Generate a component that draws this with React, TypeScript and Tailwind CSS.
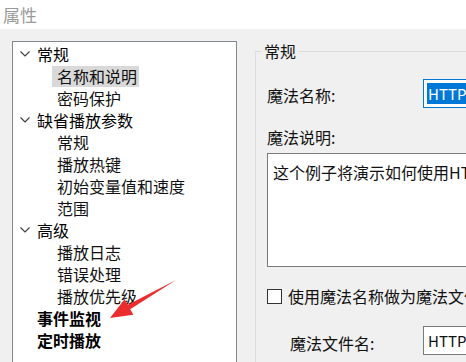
import React from 'react';

type Node = { label: string; level: 0 | 1; chevron?: boolean; bold?: boolean; selected?: boolean };

const tree: Node[] = [
  { label: '常规', level: 0, chevron: true },
  { label: '名称和说明', level: 1, selected: true },
  { label: '密码保护', level: 1 },
  { label: '缺省播放参数', level: 0, chevron: true },
  { label: '常规', level: 1 },
  { label: '播放热键', level: 1 },
  { label: '初始变量值和速度', level: 1 },
  { label: '范围', level: 1 },
  { label: '高级', level: 0, chevron: true },
  { label: '播放日志', level: 1 },
  { label: '错误处理', level: 1 },
  { label: '播放优先级', level: 1 },
  { label: '事件监视', level: 0, bold: true },
  { label: '定时播放', level: 0, bold: true },
];

const Chevron = () => (
  <svg width="10" height="6" viewBox="0 0 10 6" className="shrink-0">
    <polyline points="0.5,0.5 5,5 9.5,0.5" fill="none" stroke="#404040" strokeWidth="1.2" />
  </svg>
);

const TreeRow: React.FC<{ node: Node }> = ({ node }) => {
  if (node.level === 0) {
    return (
      <div className="h-[22px] flex items-center pl-[7px]">
        <div className="w-[17px] shrink-0">{node.chevron && <Chevron />}</div>
        <span className={node.bold ? 'font-bold text-black' : 'text-black'}>{node.label}</span>
      </div>
    );
  }
  return (
    <div className="h-[22px] flex items-center pl-[39px]">
      <span className={`h-[21px] flex items-center pl-[5px] pr-[2px] ${node.selected ? 'bg-[#d9d9d9]' : ''}`}>
        {node.label}
      </span>
    </div>
  );
};

export default function App() {
  return (
    <div
      className="w-[466px] h-[362px] overflow-hidden flex flex-col relative text-[16px] leading-[22px] text-[#111]"
      style={{ fontFamily: '"Noto Sans CJK SC", "Noto Sans", sans-serif' }}
    >
      <div className="h-[29px] bg-white flex items-center pl-[3px] text-[17px] text-[#9a9a9a] shrink-0">属性</div>

      <div className="flex-1 bg-[#f0f0f0] flex pt-[12px] pl-[12px] gap-[18px] overflow-hidden">
        {/* tree */}
        <div className="w-[225px] shrink-0 bg-white border border-b-0 border-[#828790] pt-[1px]">
          {tree.map((n, i) => (
            <TreeRow key={i} node={n} />
          ))}
        </div>

        {/* group box */}
        <div className="w-[260px] shrink-0 mt-[10px] border border-r-0 border-b-0 border-[#dcdcdc] relative pl-[11px] pt-[27px]">
          <span className="absolute left-[6px] top-[-12px] bg-[#f0f0f0] px-[2px]">常规</span>

          <div className="flex items-center h-[29px]">
            <span className="w-[156px] shrink-0 pt-[2px]">魔法名称:</span>
            <div className="flex-1 h-[29px] border border-[#0078d7] bg-white p-[3px] overflow-hidden">
              <div className="h-[21px] bg-[#0078d7] text-white flex items-center pl-[1px] whitespace-nowrap text-[15px]">
                HTTPTest
              </div>
            </div>
          </div>

          <div className="mt-[18px]">魔法说明:</div>
          <div className="mt-[5px] h-[114px] border border-[#7a7a7a] bg-white pl-[5px] pt-[7px] whitespace-nowrap overflow-hidden">
            这个例子将演示如何使用HTTP协议
          </div>

          <div className="mt-[18px] h-[22px] flex items-center gap-[6px] whitespace-nowrap">
            <span className="w-[15px] h-[15px] border border-[#333] bg-white shrink-0" />
            <span>使用魔法名称做为魔法文件名</span>
          </div>

          <div className="mt-[19px] flex items-center h-[29px] pl-[23px]">
            <span className="w-[133px] shrink-0 pt-[5px]">魔法文件名:</span>
            <div className="flex-1 h-[29px] border border-[#7a7a7a] bg-white pl-[4px] flex items-center whitespace-nowrap text-[15px]">
              HTTP Test
            </div>
          </div>
        </div>
      </div>

      {/* red annotation arrow */}
      <svg className="absolute left-0 top-0 pointer-events-none" width="466" height="362">
        <polygon
          points="176,280 130.2,309.2 133.4,314.8 110,318 124.6,299.2 127.8,304.8"
          fill="#ec2d2d"
        />
      </svg>
    </div>
  );
}
